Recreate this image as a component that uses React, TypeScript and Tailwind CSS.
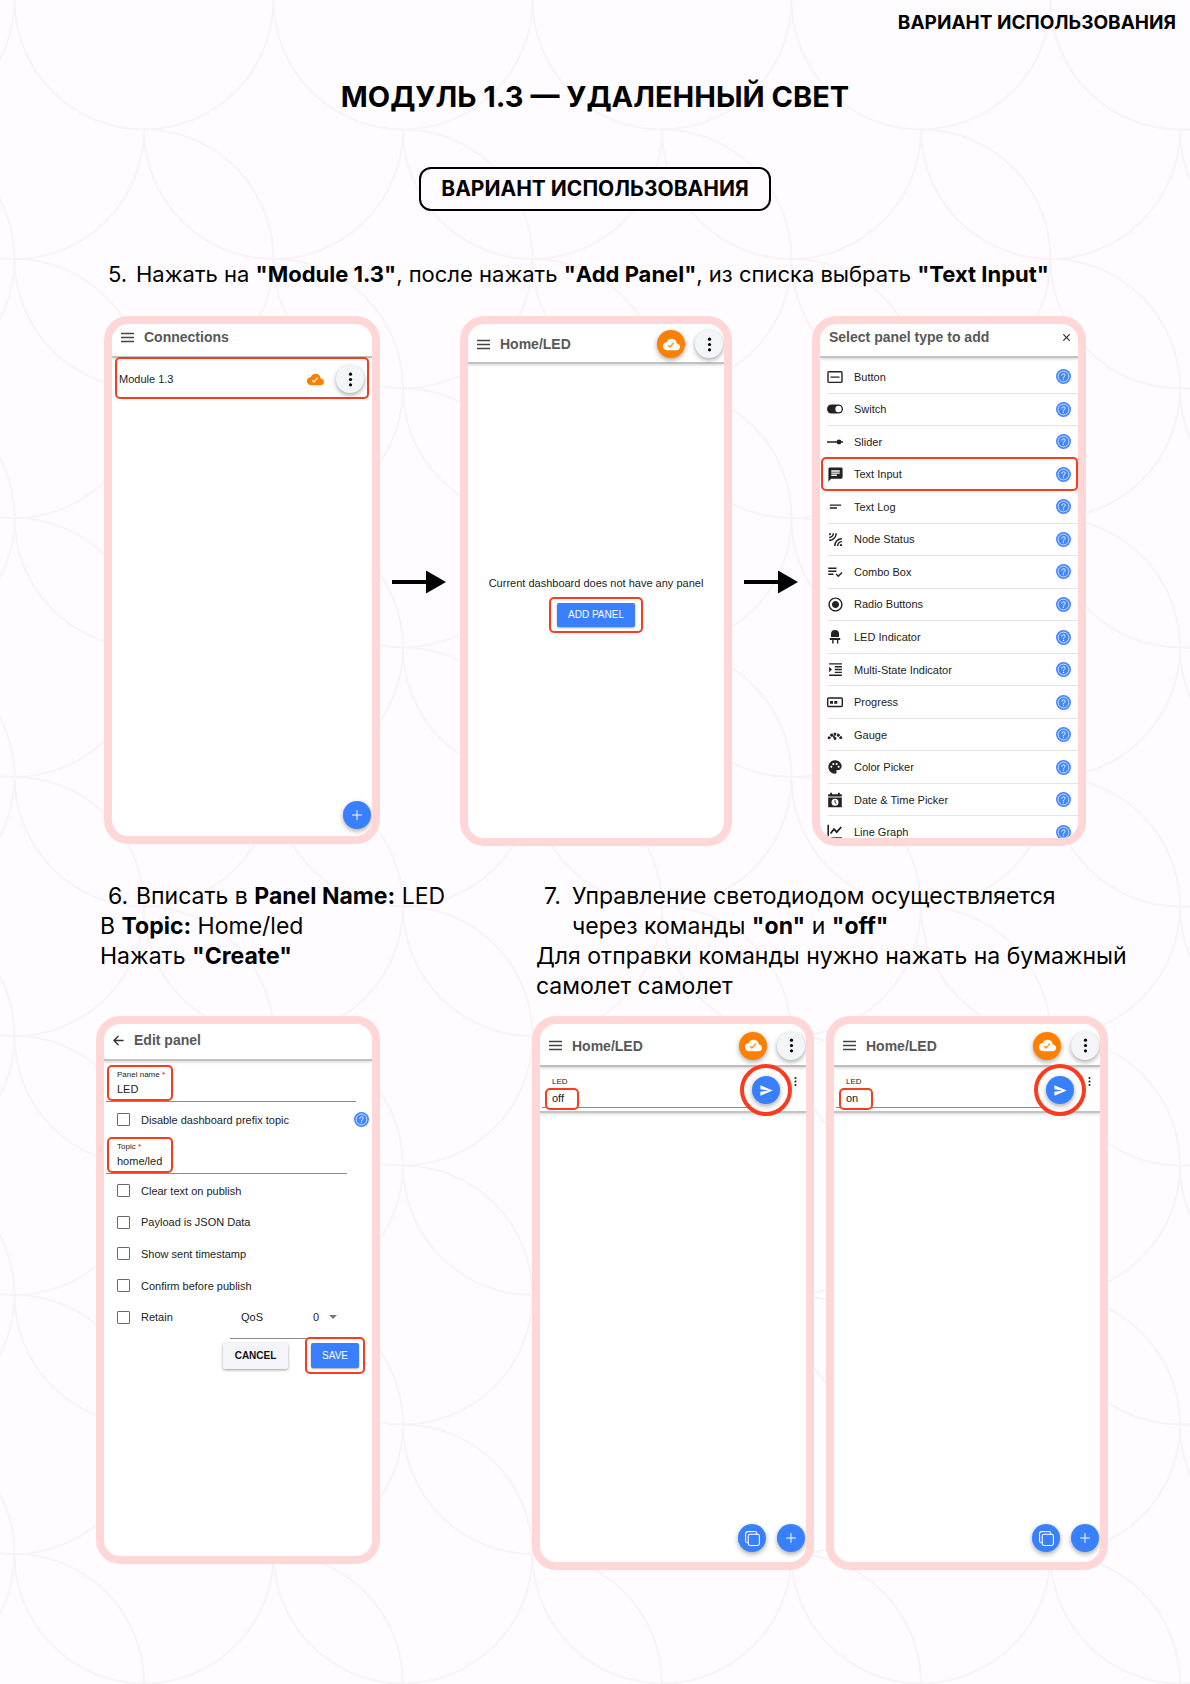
import type { ReactNode } from "react";
import {
  IoAddOutline,
  IoArrowBackOutline,
  IoClose,
  IoCloudDone,
  IoCopyOutline,
  IoEllipsisVertical,
  IoSendSharp,
} from "react-icons/io5";
import {
  MdChat,
  MdFormatIndentIncrease,
  MdLeakAdd,
  MdPalette,
  MdPlaylistAddCheck,
  MdRadioButtonChecked,
  MdShortText,
} from "react-icons/md";

const RADIUS = 129.5;

function ScalePattern() {
  const paths: string[] = [];
  for (let row = 0; row < 15; row++) {
    const cy = row * RADIUS;
    const start = row % 2 === 0 ? 144 : 14.5;
    for (let col = -1; col < 6; col++) {
      const cx = start + col * RADIUS * 2;
      const top = `M${cx} ${cy - RADIUS}A${RADIUS} ${RADIUS} 0 0 1 ${cx + RADIUS} ${cy}`;
      const bottom = `A${RADIUS} ${RADIUS} 0 0 1 ${cx - RADIUS} ${cy}`;
      paths.push(row < 2 ? `M${cx + RADIUS} ${cy}${bottom}` : top + bottom);
    }
  }
  return (
    <svg aria-hidden="true" className="absolute inset-0 h-full w-full" fill="none" stroke="#f7f3f7" strokeWidth="2">
      {paths.map((d) => (
        <path key={d} d={d} />
      ))}
    </svg>
  );
}

function Phone({ className = "", children }: { className?: string; children: ReactNode }) {
  return (
    <section
      className={`relative flex flex-col overflow-hidden rounded-[24px] border-8 border-[#ffd7d7] bg-white font-['Liberation_Sans',Arial,sans-serif] text-[11px] leading-4 text-[#1c1c1c] ${className}`}
    >
      {children}
    </section>
  );
}

function MenuButton() {
  return (
    <button type="button" aria-label="Menu" className="flex h-4 shrink-0 items-center">
      <svg width="13" height="11" viewBox="0 0 13 11" stroke="#444" strokeWidth="1.3">
        <path d="M0 1.5h13M0 5.5h13M0 9.5h13" />
      </svg>
    </button>
  );
}

function Title({ children }: { children: ReactNode }) {
  return <h2 className="text-sm leading-4 font-bold text-[#585858]">{children}</h2>;
}

const round = "flex size-7 shrink-0 items-center justify-center rounded-full shadow-[0_2px_5px_rgba(0,0,0,0.35)]";

function MoreButton() {
  return (
    <button type="button" aria-label="More" className={`${round} bg-[#f4f5f8] text-black`}>
      <IoEllipsisVertical size={17} />
    </button>
  );
}

function CloudButton() {
  return (
    <button type="button" aria-label="Connected" className={`${round} bg-[#ff8000] text-white`}>
      <IoCloudDone size={17} />
    </button>
  );
}

function AddButton() {
  return (
    <button type="button" aria-label="Add" className={`${round} bg-[#3880ff] text-white`}>
      <IoAddOutline size={16} />
    </button>
  );
}

function HelpButton() {
  return (
    <button type="button" aria-label="Help" className="shrink-0">
      <svg width="15" height="15" viewBox="0 0 15 15" fill="none">
        <circle cx="7.5" cy="7.5" r="7.5" fill="#4486fb" />
        <circle cx="7.5" cy="7.5" r="5.4" stroke="#dbe8ff" strokeWidth="0.9" />
        <path d="M5.800 6.200a1.700 1.500 0 1 1 2.700 1.200c-.7.450-1 .7-1 1.400" stroke="#fff" strokeWidth="0.95" strokeLinecap="round" />
        <circle cx="7.500" cy="10.400" r="0.600" fill="#fff" />
      </svg>
    </button>
  );
}

const headerShadow = "relative border-b-2 border-[#c2c2c2] shadow-[0_1px_3px_rgba(0,0,0,0.18)]";

function HomeHeader({ className }: { className: string }) {
  return (
    <header className={`flex items-center pt-0.5 pr-px pl-[9px] ${headerShadow} ${className}`}>
      <MenuButton />
      <div className="ml-2.5 flex-1">
        <Title>Home/LED</Title>
      </div>
      <div className="flex gap-2.5">
        <CloudButton />
        <MoreButton />
      </div>
    </header>
  );
}

function Arrow() {
  return (
    <svg viewBox="0 0 54 24" className="mt-[254px] ml-3 w-[54px]" aria-hidden="true">
      <path d="M0 10h34V0.5L54 12L34 23.5V14H0Z" fill="#000" />
    </svg>
  );
}

function ConnectionsPhone() {
  return (
    <Phone className="min-h-[528px]">
      <header className={`flex h-[34px] items-start gap-2.5 pt-[5px] pl-[9px] ${headerShadow}`}>
        <MenuButton />
        <Title>Connections</Title>
      </header>
      <div className="relative -mt-px mr-[3px] ml-[3px] flex h-[42px] items-center rounded-[5px] border-2 border-[#fb3b1e] bg-white pt-0.5 pr-[3px] pl-0.5">
        <span className="flex-1">Module 1.3</span>
        <IoCloudDone size={17} className="mr-3 text-[#ff8000]" />
        <MoreButton />
      </div>
      <div className="mt-auto mb-[7px] flex justify-end pr-px">
        <AddButton />
      </div>
    </Phone>
  );
}

function EmptyPhone() {
  return (
    <Phone className="min-h-[530px]">
      <HomeHeader className="h-10" />
      <div className="mt-[211px] flex flex-col items-center">
        <p>Current dashboard does not have any panel</p>
        <div className="mt-1.5 rounded-[5px] border-2 border-[#fb3b1e] px-1.5 py-1">
          <button
            type="button"
            className="flex h-6 w-[78px] items-center justify-center rounded-xs bg-[#3880ff] text-[10px] text-white shadow-[0_1px_2px_rgba(0,0,0,0.35)]"
          >
            ADD PANEL
          </button>
        </div>
      </div>
    </Phone>
  );
}

function Glyph({ children }: { children: ReactNode }) {
  return (
    <svg width="16" height="16" viewBox="0 0 16 16" fill="none" stroke="#222" strokeWidth="1.4">
      {children}
    </svg>
  );
}

const panelTypes: { name: string; icon: ReactNode }[] = [
  {
    name: "Button",
    icon: (
      <Glyph>
        <rect x="1" y="2.8" width="14" height="10.6" rx="1" />
        <path d="M3.500 8.1h9" />
      </Glyph>
    ),
  },
  {
    name: "Switch",
    icon: (
      <Glyph>
        <rect x="0" y="3.500" width="16" height="9" rx="4.500" fill="#222" stroke="none" />
        <circle cx="11.500" cy="8" r="3.200" fill="#fff" stroke="none" />
      </Glyph>
    ),
  },
  {
    name: "Slider",
    icon: (
      <Glyph>
        <path d="M0 8h16" strokeWidth="1.6" />
        <circle cx="12" cy="8" r="2.4" fill="#222" stroke="none" />
      </Glyph>
    ),
  },
  { name: "Text Input", icon: <MdChat size={17} className="shrink-0" /> },
  { name: "Text Log", icon: <MdShortText size={17} className="shrink-0" /> },
  { name: "Node Status", icon: <MdLeakAdd size={17} className="shrink-0" /> },
  { name: "Combo Box", icon: <MdPlaylistAddCheck size={18} className="shrink-0" /> },
  { name: "Radio Buttons", icon: <MdRadioButtonChecked size={17} className="shrink-0" /> },
  {
    name: "LED Indicator",
    icon: (
      <Glyph>
        <path
          d="M4 8V5a4 4 0 0 1 8 0V8ZM2.800 9H13.200V11H11.300V14.500H9.900V11H6.600V14.500H5.200V11H2.800Z"
          fill="#222"
          stroke="none"
        />
      </Glyph>
    ),
  },
  { name: "Multi-State Indicator", icon: <MdFormatIndentIncrease size={17} className="shrink-0" /> },
  {
    name: "Progress",
    icon: (
      <Glyph>
        <rect x="0.700" y="4" width="14.600" height="8.500" rx="1" />
        <path d="M3 7h3v2.800H3zM7.300 7h3v2.800h-3z" fill="#222" stroke="none" />
      </Glyph>
    ),
  },
  {
    name: "Gauge",
    icon: (
      <Glyph>
        <path d="M1.800 12A6.400 6.400 0 0 1 14.200 12" strokeWidth="2.800" strokeDasharray="2.500 1" />
        <path d="M4.600 6.800L9.300 10.800A1.500 1.500 0 0 1 7.200 12.800Z" fill="#222" stroke="none" />
      </Glyph>
    ),
  },
  { name: "Color Picker", icon: <MdPalette size={16} className="shrink-0" /> },
  {
    name: "Date & Time Picker",
    icon: (
      <Glyph>
        <path d="M1.200 2.200H3.200V0.800H5V2.200H11V0.800H12.800V2.200H14.800V4.500H1.200ZM1.200 5.500H14.800V15.200H1.200Z" fill="#222" stroke="none" />
        <circle cx="8" cy="10.300" r="3.500" fill="#fff" stroke="none" />
        <path d="M8 8.200V10.400L9.500 11.700" strokeWidth="1" />
      </Glyph>
    ),
  },
  {
    name: "Line Graph",
    icon: (
      <Glyph>
        <path d="M1.200 0.800V14H15" strokeWidth="1.600" />
        <path d="M3.500 9.500L7 5.200L9.700 8.200L14.300 3" strokeWidth="1.800" />
      </Glyph>
    ),
  },
];

function PanelTypePhone() {
  return (
    <Phone className="h-[530px]">
      <header className={`flex h-[34px] shrink-0 items-start justify-between pt-[5px] pr-[5px] pl-[9px] ${headerShadow}`}>
        <Title>Select panel type to add</Title>
        <button type="button" aria-label="Close" className="flex h-4 items-center text-[#333]">
          <IoClose size={13} />
        </button>
      </header>
      <ul className="mt-[3px] grid h-[488px] shrink-0 auto-rows-fr">
        {panelTypes.map(({ name, icon }) => (
          <li key={name} className="relative pl-[7px]">
            <div className="flex h-full items-center border-b border-[#e4e4e4] pr-[7px]">
              <span className="flex w-4 shrink-0 justify-center text-[#222]">{icon}</span>
              <span className="ml-[11px] flex-1">{name}</span>
              <HelpButton />
            </div>
            {name === "Text Input" && (
              <div className="pointer-events-none absolute -top-0.5 right-0 bottom-0 left-px rounded-[5px] border-2 border-[#fb3b1e]" />
            )}
          </li>
        ))}
      </ul>
    </Phone>
  );
}

function Field({ id, label, value, className }: { id: string; label: string; value: string; className: string }) {
  return (
    <div className={`ml-0.5 border-b border-[#8a8a8a] ${className}`}>
      <div className="relative ml-px h-9 w-[66px] rounded-[5px] border-2 border-[#fb3b1e] pt-0.5 pl-2">
        <label htmlFor={id} className="block text-[8px] leading-3">
          {label} <span className="text-red-600">*</span>
        </label>
        <input id={id} defaultValue={value} className="block h-4 w-full bg-transparent outline-none" />
      </div>
    </div>
  );
}

function Check({ label }: { label: string }) {
  return (
    <label className="flex items-center gap-[11px]">
      <input type="checkbox" className="size-[13px] shrink-0 appearance-none rounded-[1px] border-[1.5px] border-[#6a6a6a]" />
      {label}
    </label>
  );
}

function EditPhone() {
  return (
    <Phone className="min-h-[548px] w-[284px]">
      <header className={`flex h-[37px] items-start gap-2 pt-2 pl-[7px] ${headerShadow}`}>
        <button type="button" aria-label="Back" className="flex h-4 items-center text-[#333]">
          <IoArrowBackOutline size={15} />
        </button>
        <Title>Edit panel</Title>
      </header>
      <form className="mt-1" onSubmit={(e) => e.preventDefault()}>
        <Field id="panel-name" label="Panel name" value="LED" className="mr-4" />
        <div className="flex h-[35px] items-center justify-between pr-[3px] pl-[13px]">
          <Check label="Disable dashboard prefix topic" />
          <HelpButton />
        </div>
        <Field id="topic" label="Topic" value="home/led" className="mr-[25px]" />
        <div className="mt-px grid h-[158px] auto-rows-fr items-center pl-[13px]">
          <Check label="Clear text on publish" />
          <Check label="Payload is JSON Data" />
          <Check label="Show sent timestamp" />
          <Check label="Confirm before publish" />
          <div className="flex items-center justify-between pr-[30px]">
            <Check label="Retain" />
            <div className="flex h-8 w-[112px] items-center justify-between pr-px pl-[11px]">
              <label htmlFor="qos">QoS</label>
              <div className="relative">
                <select id="qos" defaultValue="0" className="w-7 appearance-none bg-transparent outline-none">
                  <option>0</option>
                  <option>1</option>
                  <option>2</option>
                </select>
                <svg width="8" height="4" viewBox="0 0 8 4" className="pointer-events-none absolute top-1.5 right-1" aria-hidden="true">
                  <path d="M0 0h8L4 4Z" fill="#777" />
                </svg>
              </div>
            </div>
          </div>
        </div>
        <div className="mt-[5px] mr-[30px] ml-auto w-[112px] border-t border-[#8a8a8a]" />
        <div className="-mt-0.5 flex items-center justify-end gap-[17px] pr-[7px]">
          <button
            type="button"
            className="flex h-[26px] w-[65px] items-center justify-center rounded-xs bg-[#f4f5f8] text-[10px] font-bold text-[#111] shadow-[0_1px_3px_rgba(0,0,0,0.4)]"
          >
            CANCEL
          </button>
          <div className="relative rounded-[5px] border-2 border-[#fb3b1e] bg-white p-1">
            <button
              type="submit"
              className="flex h-[25px] w-12 items-center justify-center rounded-xs bg-[#3880ff] text-[10px] text-white shadow-[0_1px_2px_rgba(0,0,0,0.35)]"
            >
              SAVE
            </button>
          </div>
        </div>
      </form>
    </Phone>
  );
}

function CommandPhone({ value }: { value: string }) {
  const id = `led-${value}`;
  return (
    <Phone className="min-h-[554px] flex-1">
      <HomeHeader className="h-[43px]" />
      <div className="relative flex h-[46px] border-b-2 border-[#c2c2c2] shadow-[0_1px_3px_rgba(0,0,0,0.18)]">
        <div className="mb-[3px] ml-0.5 flex-1 border-b border-[#8a8a8a] pt-[9px]">
          <label htmlFor={id} className="ml-2.5 block text-[8px] leading-3">
            LED
          </label>
          <div className="ml-[3px] w-[34px] rounded-[5px] border-2 border-[#fb3b1e] bg-white pb-0.5 pl-[5px]">
            <input id={id} defaultValue={value} className="block h-4 w-full bg-transparent outline-none" />
          </div>
        </div>
        <div className="relative -mt-[3px] -ml-2 flex size-[52px] shrink-0 items-center justify-center rounded-full border-4 border-[#fb3b1e] bg-white">
          <button type="button" aria-label="Send" className={`${round} bg-[#3880ff] text-white`}>
            <IoSendSharp size={13} />
          </button>
        </div>
        <button type="button" aria-label="Panel menu" className="flex h-7 w-[14px] items-center">
          <IoEllipsisVertical size={11} className="-ml-0.5" />
        </button>
      </div>
      <div className="mt-auto mb-2.5 flex justify-end gap-[11px] pr-px">
        <button type="button" aria-label="Copy" className={`${round} bg-[#3880ff] text-white`}>
          <IoCopyOutline size={17} />
        </button>
        <AddButton />
      </div>
    </Phone>
  );
}

export default function App() {
  return (
    <main className="relative min-h-screen overflow-hidden bg-[#fffcff] pb-[114px] font-[Inter,sans-serif] text-black">
      <ScalePattern />
      <div className="relative">
        <div className="pt-2 pr-[14px] text-right text-[19px] leading-[30px] font-bold">ВАРИАНТ ИСПОЛЬЗОВАНИЯ</div>
        <h1 className="mt-[39px] text-center text-[29px] leading-10 font-bold">МОДУЛЬ 1.3 — УДАЛЕННЫЙ СВЕТ</h1>
        <div className="mt-[50px] flex justify-center">
          <div className="rounded-xl border-2 border-black bg-[#fffcff] px-5 py-[5px] text-[21px] leading-[30px] font-bold">
            ВАРИАНТ ИСПОЛЬЗОВАНИЯ
          </div>
        </div>

        <p className="mt-12 flex pl-[108px] text-[22px] leading-[30px]">
          <span className="w-7 shrink-0">5.</span>
          <span>
            Нажать на <b>"Module 1.3"</b>, после нажать <b>"Add Panel"</b>, из списка выбрать <b>"Text Input"</b>
          </span>
        </p>
        <div className="mt-[27px] grid grid-cols-[276fr_80px_272fr_80px_274fr] items-start px-[104px]">
          <ConnectionsPhone />
          <Arrow />
          <EmptyPhone />
          <Arrow />
          <PanelTypePhone />
        </div>

        <div className="mt-[35px] grid grid-cols-[436fr_606fr] pr-[52px] pl-24">
          <div>
            <div className="min-h-[135px] pl-1 text-[23px] leading-[30px]">
              <p className="flex pl-2">
                <span className="w-7 shrink-0">6.</span>
                <span>
                  Вписать в <b>Panel Name:</b> LED
                </span>
              </p>
              <p>
                В <b>Topic:</b> Home/led
              </p>
              <p>
                Нажать <b>"Create"</b>
              </p>
            </div>
            <EditPhone />
          </div>
          <div>
            <div className="min-h-[135px] pl-1 text-[23px] leading-[30px]">
              <p className="flex pl-2">
                <span className="w-7 shrink-0">7.</span>
                <span>
                  Управление светодиодом осуществляется
                  <br />
                  через команды <b>"on"</b> и <b>"off"</b>
                </span>
              </p>
              <p>Для отправки команды нужно нажать на бумажный самолет самолет</p>
            </div>
            <div className="flex gap-3 pr-[30px]">
              <CommandPhone value="off" />
              <CommandPhone value="on" />
            </div>
          </div>
        </div>
      </div>
    </main>
  );
}
